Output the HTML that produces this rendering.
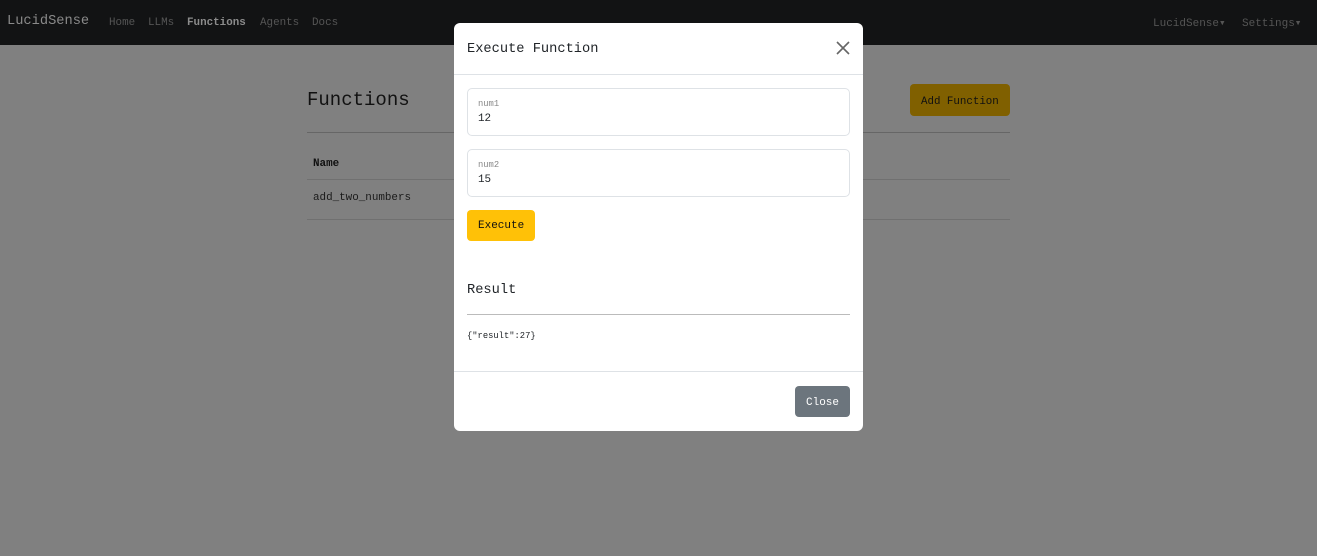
<!DOCTYPE html>
<html><head><style>
*{margin:0;padding:0;box-sizing:border-box}
body{width:1317px;height:556px;overflow:hidden;background:#808080;font-family:"Liberation Mono",monospace;position:relative;color:#111}
.a{position:absolute;white-space:nowrap}
.nav{position:absolute;left:0;top:0;width:1317px;height:45px;background:#121314}
.hr{position:absolute;height:1px}
.modal{position:absolute;left:454px;top:23px;width:409px;height:408px;background:#fff;border-radius:6px}
.inp{position:absolute;left:13px;width:383px;height:48px;border:1px solid #dee2e6;border-radius:5px}
</style></head><body>
<div class="nav">
<div class="a" style="left:7px;top:14px;font-size:13.7px;color:#8a8a8a">LucidSense</div>
<div class="a" style="left:109px;top:17px;font-size:10.9px;color:#555">Home</div>
<div class="a" style="left:148px;top:17px;font-size:10.9px;color:#555">LLMs</div>
<div class="a" style="left:187px;top:17px;font-size:10.9px;color:#8c8c8c;font-weight:bold">Functions</div>
<div class="a" style="left:260px;top:17px;font-size:10.9px;color:#555">Agents</div>
<div class="a" style="left:312px;top:17px;font-size:10.9px;color:#555">Docs</div>
<div class="a" style="left:1153px;top:16px;font-size:11px;color:#555">LucidSense▾</div>
<div class="a" style="left:1242px;top:16px;font-size:11px;color:#555">Settings▾</div>
</div>
<div class="a" style="left:307px;top:89px;font-size:19px;color:#111">Functions</div>
<div class="a" style="left:910px;top:84px;width:100px;height:32px;background:#806000;border-radius:4px"></div>
<div class="a" style="left:921px;top:96px;font-size:10.8px;color:#111">Add Function</div>
<div class="hr" style="left:307px;top:132px;width:703px;background:#666"></div>
<div class="a" style="left:313px;top:158px;font-size:10.9px;font-weight:bold">Name</div>
<div class="hr" style="left:307px;top:179px;width:703px;background:#707070"></div>
<div class="a" style="left:313px;top:192px;font-size:10.9px;color:#1a1a1a">add_two_numbers</div>
<div class="hr" style="left:307px;top:219px;width:703px;background:#707070"></div>
<div class="modal">
<div class="a" style="left:13px;top:19px;font-size:13.7px;color:#212529">Execute Function</div>
<svg class="a" style="left:382px;top:18px" width="14" height="14" viewBox="0 0 14 14"><path d="M1 1L13 13M13 1L1 13" stroke="#666" stroke-width="1.6"/></svg>
<div class="hr" style="left:0;top:51px;width:409px;background:#dee2e6"></div>
<div class="inp" style="top:65px"></div>
<div class="a" style="left:24px;top:76px;font-size:8.8px;color:#888">num1</div>
<div class="a" style="left:24px;top:90px;font-size:10.9px;color:#212529">12</div>
<div class="inp" style="top:126px"></div>
<div class="a" style="left:24px;top:137px;font-size:8.8px;color:#888">num2</div>
<div class="a" style="left:24px;top:151px;font-size:10.9px;color:#212529">15</div>
<div class="a" style="left:13px;top:187px;width:68px;height:31px;background:#ffc107;border-radius:4px"></div>
<div class="a" style="left:24px;top:197px;font-size:11px;color:#111">Execute</div>
<div class="a" style="left:13px;top:260px;font-size:13.7px;color:#212529">Result</div>
<div class="hr" style="left:13px;top:291px;width:383px;background:#bbb"></div>
<div class="a" style="left:13px;top:308px;font-size:8.8px;color:#212529">{"result":27}</div>
<div class="hr" style="left:0;top:348px;width:409px;background:#dee2e6"></div>
<div class="a" style="left:341px;top:363px;width:55px;height:31px;background:#6c757d;border-radius:4px"></div>
<div class="a" style="left:352px;top:374px;font-size:11px;color:#fff">Close</div>
</div>
</body></html>
